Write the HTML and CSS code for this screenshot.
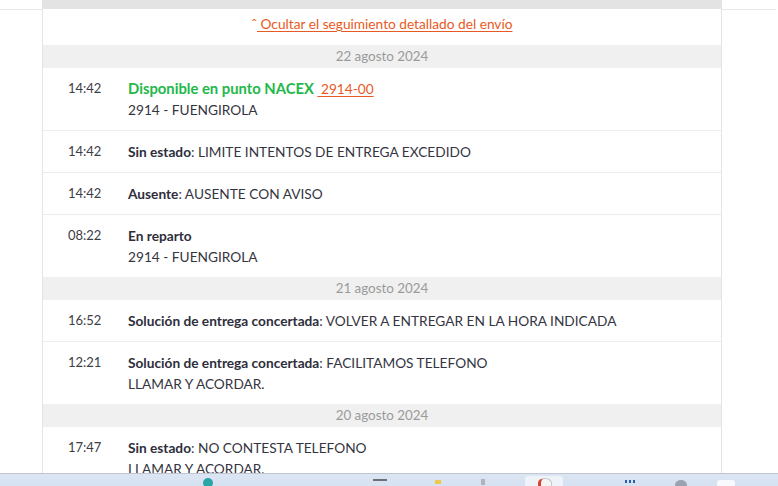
FILE: index.html
```html
<!DOCTYPE html>
<html lang="es">
<head>
<meta charset="utf-8">
<link rel="stylesheet" href="styles.css">
</head>
<body>
<div class="screen">
  <div class="viewport">
    <div class="topline"><div class="topbar"></div></div>
    <div class="card">
      <div class="toggle"><a href="#" class="link"><span class="caret">ˆ</span> Ocultar el seguimiento detallado del envío</a></div>

      <div class="date">22 agosto 2024</div>
      <div class="row">
        <div class="time">14:42</div>
        <div class="desc">
          <div><b class="green">Disponible en punto NACEX</b> <a href="#" class="link">&nbsp;2914-00</a></div>
          <div>2914 - FUENGIROLA</div>
        </div>
      </div>
      <div class="row">
        <div class="time">14:42</div>
        <div class="desc"><div><b>Sin estado</b>: LIMITE INTENTOS DE ENTREGA EXCEDIDO</div></div>
      </div>
      <div class="row">
        <div class="time">14:42</div>
        <div class="desc"><div><b>Ausente</b>: AUSENTE CON AVISO</div></div>
      </div>
      <div class="row">
        <div class="time">08:22</div>
        <div class="desc"><div><b>En reparto</b></div><div>2914 - FUENGIROLA</div></div>
      </div>

      <div class="date">21 agosto 2024</div>
      <div class="row">
        <div class="time">16:52</div>
        <div class="desc"><div><b>Solución de entrega concertada</b>: VOLVER A ENTREGAR EN LA HORA INDICADA</div></div>
      </div>
      <div class="row">
        <div class="time">12:21</div>
        <div class="desc"><div><b>Solución de entrega concertada</b>: FACILITAMOS TELEFONO</div><div>LLAMAR Y ACORDAR.</div></div>
      </div>

      <div class="date">20 agosto 2024</div>
      <div class="row">
        <div class="time">17:47</div>
        <div class="desc"><div><b>Sin estado</b>: NO CONTESTA TELEFONO</div><div>LLAMAR Y ACORDAR.</div></div>
      </div>
    </div>
  </div>
  <div class="taskbar">
    <span class="tb tb-teal"></span>
    <span class="tb tb-gray"></span>
    <span class="tb tb-yellow"></span>
    <span class="tb tb-dark"></span>
    <span class="tb tb-active"><span class="tb-red"></span></span>
    <span class="tb tb-dots"></span>
    <span class="tb tb-circle"></span>
    <span class="tb tb-white"></span>
  </div>
</div>
</body>
</html>
```

FILE: styles.css
```css
* { box-sizing: border-box; }
html, body { margin: 0; padding: 0; background: #fff; }
body {
  font-family: Lato, "Noto Sans", sans-serif;
  font-size: 13.7px;
  color: #35353f;
}
.screen { width: 778px; height: 486px; display: flex; flex-direction: column; overflow: hidden; }
.viewport { height: 473px; overflow: hidden; flex: none; }
.topline { height: 10px; border-bottom: 1px solid #e8e8e8; display: flex; margin-right: 2px; }
.topbar { margin-left: 42px; width: 680px; height: 9px; background: #e3e3e3; }
.card {
  margin-left: 42px;
  width: 680px;
  border-left: 1px solid #e4e4e4;
  border-right: 1px solid #e4e4e4;
  margin-top: -1px;
  background: #fff;
}
.toggle { height: 36px; display: flex; justify-content: center; padding-top: 6px; line-height: 18px; }
.link { color: #e85a24; text-decoration: underline; text-underline-offset: 2px; }
.caret { display: inline-block; }
.date {
  height: 23px;
  line-height: 23px;
  background: #f0f0f0;
  color: #9a9a9a;
  text-align: center;
  font-size: 13.4px;
}
.row {
  display: flex;
  padding: 10px 0 10px 25px;
  line-height: 21px;
  border-bottom: 1px solid #ececec;
}
.row:has(+ .date) { border-bottom: none; }
.time { width: 60px; flex: none; color: #3d3d45; font-size: 13px; }
.desc { flex: 1; }
b { font-weight: 700; color: #2e2e3c; }
b.green { color: #22b84a; font-size: 14.8px; }
.taskbar {
  flex: none;
  height: 13px;
  border-top: 1px solid #bfc6d2;
  background: linear-gradient(#dbe5f3, #d6e1f1);
  display: flex;
  align-items: flex-start;
  padding-top: 2px;
}
.tb { display: block; flex: none; }
.tb-teal { margin-left: 203px; width: 10px; height: 10px; border-radius: 50%; background: #2aa6a8; margin-top: 2px; }
.tb-gray { margin-left: 160px; width: 14px; height: 2px; background: #6e6e74; margin-top: 3px; }
.tb-yellow { margin-left: 48px; width: 6px; height: 4px; background: #f0c84a; margin-top: 4px; }
.tb-dark { margin-left: 40px; width: 4px; height: 6px; background: #b0b4bc; margin-top: 3px; }
.tb-active { margin-left: 40px; width: 38px; height: 12px; background: #eef2f9; border-radius: 3px; position: relative; }
.tb-red { position: absolute; left: 13px; top: 2px; width: 14px; height: 10px; border-radius: 50% 50% 0 0; border: 1px solid #c9c9c9; border-left: 3px solid #d8432f; background: #f4f4f4; }
.tb-dots { margin-left: 62px; width: 12px; height: 3px; margin-top: 4px; background: repeating-linear-gradient(90deg, #2a5fb0 0 2px, transparent 2px 4px); }
.tb-circle { margin-left: 38px; width: 12px; height: 10px; border-radius: 50%; background: #9aa3b2; margin-top: 4px; }
.tb-white { margin-left: 30px; width: 18px; height: 8px; border-radius: 3px; background: #f7f9fc; margin-top: 4px; }
```
